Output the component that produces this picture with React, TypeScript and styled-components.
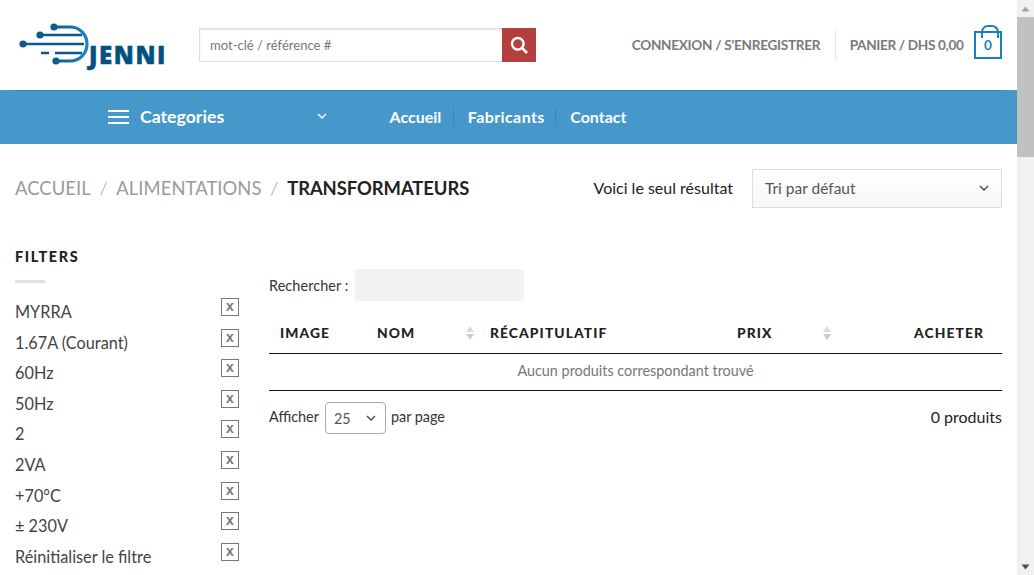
import React from "react";
import styled, { createGlobalStyle } from "styled-components";

const Global = createGlobalStyle`
  html, body { margin: 0; padding: 0; height: 575px; overflow: hidden; background: #fff; }
  body { font-family: Lato, "Liberation Sans", sans-serif; color: #333; }
  * { box-sizing: border-box; }
`;

const Shell = styled.div`
  display: flex;
  width: 1034px;
  height: 575px;
  overflow: hidden;
`;
const Page = styled.div`
  width: 1017px;
  flex: none;
`;
const ScrollTrack = styled.div`
  width: 17px;
  height: 575px;
  background: #f1f1f1;
  display: flex;
  flex-direction: column;
  justify-content: space-between;
`;
const ScrollTop = styled.div`
  display: flex;
  flex-direction: column;
`;
const ScrollBtn = styled.div`
  height: 17px;
  display: flex;
  align-items: center;
  justify-content: center;
`;
const ScrollThumb = styled.div`
  height: 140px;
  background: #c1c1c1;
`;

const Header = styled.header`
  height: 90px;
  display: flex;
  align-items: center;
  padding: 0 15px;
`;
const Logo = styled.div`
  width: 184px;
  height: 62px;
  position: relative;
  flex: none;
`;
const LogoText = styled.span`
  position: absolute;
  left: 74px;
  top: 28px;
  font: 800 24px/26px "Open Sans", Lato, sans-serif;
  letter-spacing: 1.6px;
  -webkit-text-stroke: 0.5px #04517f;
  color: #04517f;
`;
const Search = styled.form`
  width: 337px;
  height: 34px;
  display: flex;
  margin: 0;
`;
const SearchInput = styled.div`
  flex: 1;
  border: 1px solid #ddd;
  border-right: 0;
  box-shadow: inset 0 1px 2px rgba(0, 0, 0, 0.1);
  font-size: 13.05px;
  color: #777;
  line-height: 32px;
  padding-left: 10px;
`;
const SearchBtn = styled.div`
  width: 34px;
  background: #b53f3f;
  display: flex;
  align-items: center;
  justify-content: center;
`;
const HeaderRight = styled.div`
  margin-left: auto;
  display: flex;
  align-items: center;
`;
const TopLink = styled.span<{ $spacing: number }>`
  font-size: 13.6px;
  font-weight: 700;
  letter-spacing: ${(p) => p.$spacing}px;
  color: #7a7a7a;
  white-space: nowrap;
`;
const VDivider = styled.span`
  width: 1px;
  height: 30px;
  background: #e5e5e5;
  margin: 0 14px 0 14.5px;
`;
const Cart = styled.div`
  width: 28px;
  height: 28px;
  border: 2px solid #1a7fc0;
  margin-left: 10.5px;
  position: relative;
  color: #1a7fc0;
  font: 700 13.6px/24px Lato, sans-serif;
  text-align: center;
  &::before {
    content: "";
    position: absolute;
    left: 5px;
    top: -8px;
    width: 14px;
    height: 11px;
    border: 2px solid #1a7fc0;
    border-bottom: 0;
    border-radius: 7px 7px 0 0;
  }
`;

const Nav = styled.nav`
  height: 54px;
  background: #4698cb linear-gradient(#3a88ba, #3a88ba) no-repeat 15px 0 / 987px 1px;
  display: flex;
  align-items: center;
  color: #fff;
  font-weight: 700;
  font-size: 16px;
  line-height: 17px;
  padding: 0 0 2px 108px;
`;
const Burger = styled.span`
  width: 21px;
  height: 14px;
  margin-top: 2px;
  border-top: 2px solid #fff;
  border-bottom: 2px solid #fff;
  position: relative;
  &::after {
    content: "";
    position: absolute;
    left: 0;
    right: 0;
    top: 4px;
    height: 2px;
    background: #fff;
  }
`;
const CatLabel = styled.span`
  font-size: 17.7px;
  margin-left: 11px;
  width: 175.5px;
`;
const NavChevron = styled.span`
  width: 20px;
  display: flex;
  margin-right: 54px;
`;
const NavLink = styled.span<{ $sep?: boolean; $wide?: boolean }>`
  padding-right: ${(p) => (p.$wide ? "10.5px" : p.$sep ? "11.5px" : "0")};
  margin-right: ${(p) => (p.$sep ? "14px" : "0")};
  border-right: ${(p) => (p.$sep ? "1px solid rgba(0,0,0,0.12)" : "0")};
  letter-spacing: ${(p) => (p.$wide ? "0.4px" : "0")};
  line-height: 17px;
`;

const TitleBar = styled.div`
  height: 64px;
  padding: 25px 15px 0;
  display: flex;
  align-items: flex-start;
`;
const Crumbs = styled.div`
  font-size: 18.4px;
  letter-spacing: 0.07px;
  color: #9a9a9a;
  line-height: 38px;
  white-space: nowrap;
`;
const CrumbSep = styled.span`
  margin: 0 8.8px;
  font-weight: 300;
`;
const CrumbNow = styled.strong`
  color: #222;
  font-weight: 700;
  letter-spacing: -0.05px;
`;
const Count = styled.span`
  margin-left: auto;
  font-size: 16px;
  color: #222;
  line-height: 37px;
`;
const SortSelect = styled.div`
  width: 250px;
  height: 39px;
  margin-left: 19px;
  border: 1px solid #ddd;
  background: linear-gradient(#fff, #f7f7f7);
  display: flex;
  align-items: center;
  justify-content: space-between;
  padding: 0 11px 2px 12px;
  font-size: 15.5px;
  color: #555;
`;

const Body = styled.div`
  display: flex;
  padding: 0 15px;
`;
const Side = styled.aside`
  width: 224px;
  flex: none;
  padding-top: 40px;
`;
const SideTitle = styled.div`
  font-size: 14.4px;
  font-weight: 900;
  letter-spacing: 1.6px;
  color: #222;
  line-height: 18px;
`;
const SideRule = styled.div`
  width: 30px;
  height: 3px;
  background: #e1e1e1;
  margin: 14px 0 14px;
`;
const FilterList = styled.div`
  display: flex;
  flex-direction: column;
`;
const FilterRow = styled.div`
  height: 30.6px;
  display: flex;
  justify-content: space-between;
  font-size: 16.3px;
  color: #444;
  line-height: 29px;
`;
const XBox = styled.span`
  width: 18px;
  height: 18px;
  border: 1px solid #777;
  margin-top: 1px;
  color: #777;
  font: 900 14px/14px "Liberation Sans", sans-serif;
  text-align: center;
`;

const Main = styled.main`
  margin-left: 30px;
  width: 733px;
  padding-top: 61px;
`;
const FilterBar = styled.div`
  display: flex;
  align-items: center;
  font-size: 14.4px;
  letter-spacing: 0.1px;
  color: #333;
`;
const FilterInput = styled.div`
  width: 169px;
  height: 32px;
  margin-left: 6px;
  background: #f2f2f2;
  border-radius: 2px;
`;
const HeadRow = styled.div`
  display: grid;
  grid-template-columns: 97px 113px 247px 110px 1fr;
  height: 41px;
  margin-top: 12px;
  padding-bottom: 2px;
  border-bottom: 1px solid #111;
  align-items: center;
  font-size: 13.8px;
  font-weight: 900;
  letter-spacing: 1.1px;
  color: #222;
`;
const HeadCell = styled.div<{ $right?: boolean }>`
  padding: 0 ${(p) => (p.$right ? "18px" : "10px")} 0 ${(p) => (p.$right ? "0" : "11px")};
  position: relative;
  text-align: ${(p) => (p.$right ? "right" : "left")};
`;
const SortIcon = styled.svg`
  position: absolute;
  right: 4px;
  top: 1px;
`;
const EmptyRow = styled.div`
  height: 37px;
  border-bottom: 1px solid #111;
  font-size: 14.4px;
  color: #777;
  text-align: center;
  line-height: 33px;
`;
const FootRow = styled.div`
  display: flex;
  align-items: flex-start;
  margin-top: 11px;
  font-size: 14.4px;
  color: #333;
  line-height: 29px;
`;
const PageSelect = styled.div`
  width: 61px;
  height: 32px;
  margin: 0 5px 0 6px;
  border: 1px solid #aaa;
  border-radius: 4px;
  display: flex;
  align-items: center;
  justify-content: space-between;
  padding: 0 8px;
  color: #555;
  font-size: 14.4px;
`;
const Total = styled.span`
  margin-left: auto;
  font-size: 16px;
  color: #222;
`;

const Chevron = ({ c = "#444", s = 12 }: { c?: string; s?: number }) => (
  <svg width={s} height={s} viewBox="0 0 12 12" fill="none">
    <path d="M2 4l4 4 4-4" stroke={c} strokeWidth="1.3" />
  </svg>
);

const Sort = () => (
  <SortIcon width="10" height="16" viewBox="0 0 10 16">
    <path d="M5 1l4 6H1z" fill="#ddd" />
    <path d="M5 15l4-6H1z" fill="#ccc" />
  </SortIcon>
);

const filters = ["MYRRA", "1.67A (Courant)", "60Hz", "50Hz", "2", "2VA", "+70°C", "± 230V", "Réinitialiser le filtre"];

export default function App() {
  return (
    <Shell>
      <Global />
      <Page>
        <Header>
          <Logo>
            <svg width="151" height="50" viewBox="0 0 151 50" style={{ position: "absolute", left: 4, top: 5 }} fill="none">
              <defs>
                <linearGradient id="lg" x1="0" x2="1" y1="0" y2="0">
                  <stop offset="0" stopColor="#0f5c8c" />
                  <stop offset="1" stopColor="#1c82c0" />
                </linearGradient>
              </defs>
              <circle cx="4" cy="25" r="3.6" fill="#0d5a8a" />
              <circle cx="21" cy="16" r="3.6" fill="#0d5a8a" />
              <circle cx="35" cy="8" r="3.6" fill="#0d5a8a" />
              <circle cx="37" cy="42" r="3.6" fill="#0d5a8a" />
              <path d="M4 25H65M21 16H63" stroke="#0d5a8a" strokeWidth="2.6" />
              <path d="M35 8H51C60.5 8 68 15.5 68 25C68 34.5 60.5 42 51 42H37" stroke="url(#lg)" strokeWidth="3.2" />
              <path d="M22 34H30M36 34H63" stroke="#0d5a8a" strokeWidth="2.6" />
            </svg>
            <LogoText>JENNI</LogoText>
          </Logo>
          <Search>
            <SearchInput>mot-clé / référence #</SearchInput>
            <SearchBtn>
              <svg width="18" height="18" viewBox="0 0 18 18" fill="none">
                <circle cx="7.8" cy="7.8" r="5.8" stroke="#fff" strokeWidth="2.4" />
                <path d="M12 12L17 17" stroke="#fff" strokeWidth="2.6" />
              </svg>
            </SearchBtn>
          </Search>
          <HeaderRight>
            <TopLink $spacing={-0.3}>CONNEXION / S’ENREGISTRER</TopLink>
            <VDivider />
            <TopLink $spacing={-0.34}>PANIER / DHS 0,00</TopLink>
            <Cart>0</Cart>
          </HeaderRight>
        </Header>
        <Nav>
          <Burger />
          <CatLabel>Categories</CatLabel>
          <NavChevron>
            <Chevron c="#fff" />
          </NavChevron>
          <NavLink $sep>Accueil</NavLink>
          <NavLink $sep $wide>Fabricants</NavLink>
          <NavLink>Contact</NavLink>
        </Nav>
        <TitleBar>
          <Crumbs>
            ACCUEIL<CrumbSep>/</CrumbSep>ALIMENTATIONS<CrumbSep>/</CrumbSep>
            <CrumbNow>TRANSFORMATEURS</CrumbNow>
          </Crumbs>
          <Count>Voici le seul résultat</Count>
          <SortSelect>
            Tri par défaut
            <Chevron />
          </SortSelect>
        </TitleBar>
        <Body>
          <Side>
            <SideTitle>FILTERS</SideTitle>
            <SideRule />
            <FilterList>
              {filters.map((f) => (
                <FilterRow key={f}>
                  {f}
                  <XBox>x</XBox>
                </FilterRow>
              ))}
            </FilterList>
          </Side>
          <Main>
            <FilterBar>
              Rechercher :<FilterInput />
            </FilterBar>
            <HeadRow>
              <HeadCell>IMAGE</HeadCell>
              <HeadCell>
                NOM
                <Sort />
              </HeadCell>
              <HeadCell>RÉCAPITULATIF</HeadCell>
              <HeadCell>
                PRIX
                <Sort />
              </HeadCell>
              <HeadCell $right>ACHETER</HeadCell>
            </HeadRow>
            <EmptyRow>Aucun produits correspondant trouvé</EmptyRow>
            <FootRow>
              Afficher
              <PageSelect>
                25
                <Chevron />
              </PageSelect>
              par page
              <Total>0 produits</Total>
            </FootRow>
          </Main>
        </Body>
      </Page>
      <ScrollTrack>
        <ScrollTop>
          <ScrollBtn>
            <svg width="9" height="6" viewBox="0 0 9 6">
              <path d="M4.5 0.5L8.5 5.5H0.5z" fill="#a3a3a3" />
            </svg>
          </ScrollBtn>
          <ScrollThumb />
        </ScrollTop>
        <ScrollBtn>
          <svg width="9" height="6" viewBox="0 0 9 6">
            <path d="M4.5 5.5L8.5 0.5H0.5z" fill="#505050" />
          </svg>
        </ScrollBtn>
      </ScrollTrack>
    </Shell>
  );
}
